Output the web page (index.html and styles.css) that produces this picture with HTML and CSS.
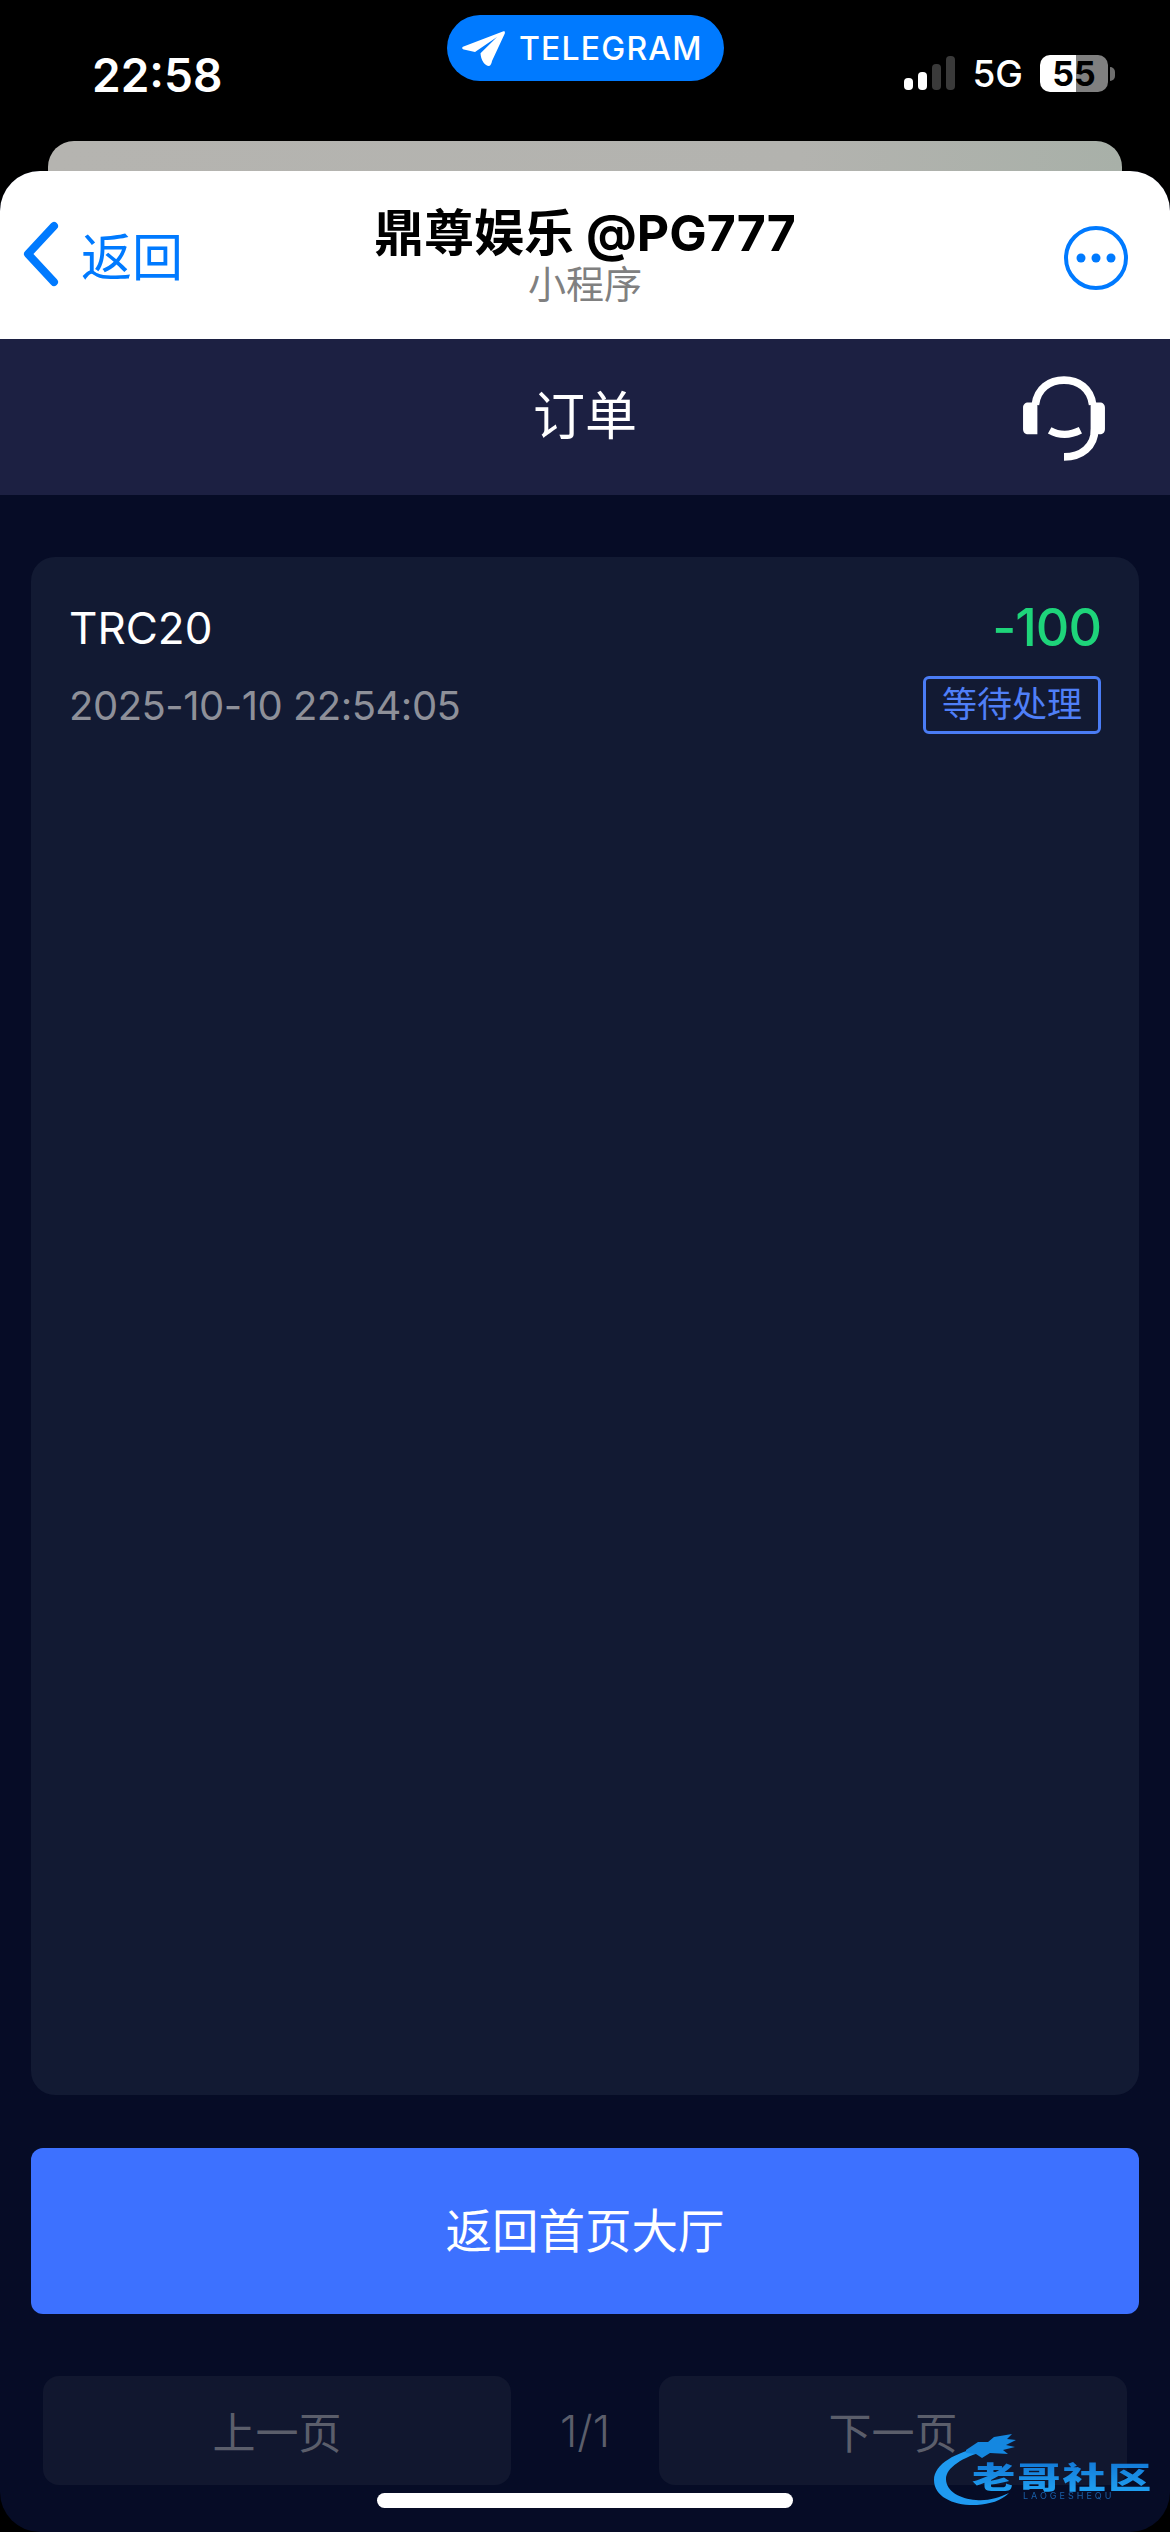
FILE: index.html
```html
<!DOCTYPE html>
<html>
<head>
    <title>订单</title>
    <link rel="stylesheet" href="styles.css">
</head>
<body>
    <div class="phone">
        <div class="status">
            <div class="time">22:58</div>
            <div class="pill">
                <svg class="plane" width="43" height="35" viewBox="0 0 43 35">
                    <path d="M41.500 .3 1.600 15.500C-.4 16.300-.3 17.900 1.800 18.400l11.200 2.700L35 6 18.500 22.300c.3 3 .6 6 3.300 9.700 1.500 2.100 5.200 4 6.500 2.300 1-1.300 1.400-2.600 1.700-4.300L42.800 2.400c.3-1.600-.1-2.500-1.300-2.100z" fill="#fff"/>
                </svg>
                <span>TELEGRAM</span>
            </div>
            <div class="status-right">
                <div class="bars">
                    <i class="bar b1"></i>
                    <i class="bar b2"></i>
                    <i class="bar b3"></i>
                    <i class="bar b4"></i>
                </div>
                <span class="net">5G</span>
                <div class="battery"><span>55</span></div>
                <i class="battery-tip"></i>
            </div>
        </div>
        <div class="back-sheet"></div>
        <div class="window">
            <div class="tg-head">
                <div class="back">
                    <svg width="38" height="66" viewBox="0 0 38 66">
                        <path d="M32 5 6 33l26 28" fill="none" stroke="#007aff" stroke-width="8" stroke-linecap="round" stroke-linejoin="round"/>
                    </svg>
                    <span>返回</span>
                </div>
                <div class="tg-title">
                    <div class="name">鼎尊娱乐 @PG777</div>
                    <div class="sub">小程序</div>
                </div>
                <svg class="more" width="66" height="66" viewBox="0 0 66 66">
                    <circle cx="33" cy="33" r="30" fill="none" stroke="#007aff" stroke-width="4"/>
                    <circle cx="18" cy="33" r="4.500" fill="#007aff"/>
                    <circle cx="33" cy="33" r="4.500" fill="#007aff"/>
                    <circle cx="48" cy="33" r="4.500" fill="#007aff"/>
                </svg>
            </div>
            <div class="nav">
                <span class="nav-title">订单</span>
                <svg class="headset" width="86" height="86" viewBox="0 0 84 84">
                    <path d="M14 28C16 12 28 4 42 4s26 8 28 24" fill="none" stroke="#fff" stroke-width="7.500"/>
                    <path d="M16 26v31H7c-3 0-5-2-5-5V31c0-3 2-5 5-5h9zM68 26h9c3 0 5 2 5 5v21c0 3-2 5-5 5h-9V26z" fill="#fff"/>
                    <path d="M72 52c0 17-13 27-30 27" fill="none" stroke="#fff" stroke-width="7.500"/>
                    <path d="M28 53c9 5 20 5 30 0" fill="none" stroke="#fff" stroke-width="7"/>
                </svg>
            </div>
            <div class="main">
                <div class="card">
                    <div class="row">
                        <div class="coin">TRC20</div>
                        <div class="amount">-100</div>
                    </div>
                    <div class="row row2">
                        <div class="date">2025-10-10 22:54:05</div>
                        <div class="badge">等待处理</div>
                    </div>
                </div>
                <button class="home-btn">返回首页大厅</button>
                <div class="pager">
                    <button class="page-btn">上一页</button>
                    <span class="page-num">1/1</span>
                    <button class="page-btn">下一页</button>
                </div>
            </div>
        </div>
        <div class="home-bar"></div>
        <svg class="mark" width="226" height="84" viewBox="0 0 226 84">
            <defs>
                <linearGradient id="markText" x1="0" y1="0" x2="0" y2="1">
                    <stop offset="0" stop-color="#0f6fd0"/>
                    <stop offset="1" stop-color="#22a6f5"/>
                </linearGradient>
            </defs>
            <path d="M50 17C24 22 2 34 2 50c0 17 20 26 43 25 13-1 24-4 32-12C66 68 56 71 44 70 28 69 14 61 14 49c0-11 16-22 40-28z" fill="#1f9af0"/>
            <path d="M34 20 46 12l10 0 6-5 18-3-5 5 9 1-10 5 9 2-12 3 5 4-18-1-8 5-6-4-10-1z" fill="#1487e0"/>
            <text class="mark-cn" transform="translate(40 58) scale(1.03 .71)" fill="url(#markText)">老哥社区</text>
            <text class="mark-en" x="91" y="69">LAOGESHEQU</text>
        </svg>
    </div>
</body>
</html>
```

FILE: styles.css
```css
* {
    box-sizing: border-box;
}
body {
    margin: 0;
    background: #000;
    font-family: Inter, "Noto Sans CJK SC", sans-serif;
}
.phone {
    position: relative;
    width: 1170px;
    height: 2532px;
    background: #000;
    overflow: hidden;
}
.status {
    display: flex;
    justify-content: space-between;
    height: 141px;
    padding: 15px 55px 0 92px;
    color: #fff;
}
.time {
    margin-top: 32px;
    font-size: 46px;
    font-weight: 600;
    line-height: 56px;
}
.pill {
    display: flex;
    align-items: center;
    gap: 14px;
    width: 277px;
    height: 66px;
    margin-left: 44px;
    padding-left: 15px;
    background: #007aff;
    border-radius: 33px;
    font-size: 32px;
    font-weight: 500;
    letter-spacing: 1.2px;
}
.status-right {
    display: flex;
    align-items: center;
    height: 37px;
    margin-top: 40px;
}
.bars {
    display: flex;
    align-items: flex-end;
    gap: 5px;
    height: 34px;
    margin-top: -2px;
}
.bar {
    width: 9px;
    background: #3a3a3a;
    border-radius: 4px;
}
.b1 {
    height: 12px;
    background: #fff;
}
.b2 {
    height: 18px;
    background: #fff;
}
.b3 {
    height: 26px;
}
.b4 {
    height: 34px;
}
.net {
    margin-left: 17px;
    font-size: 37px;
    font-weight: 500;
}
.battery {
    display: flex;
    align-items: center;
    justify-content: center;
    width: 68px;
    height: 37px;
    margin-left: 17px;
    background: linear-gradient(90deg, #fff 53%, #808080 53%);
    border-radius: 10px;
    color: #000;
    font-size: 34px;
    font-weight: 700;
}
.battery-tip {
    width: 5px;
    height: 14px;
    margin-left: 2px;
    background: #6e6e6e;
    border-radius: 0 7px 7px 0;
}
.back-sheet {
    height: 30px;
    margin: 0 48px;
    background: linear-gradient(90deg, #b5b4b0 0%, #b3b3af 70%, #a8b0a8 100%);
    border-radius: 26px 26px 0 0;
}
.window {
    display: flex;
    flex-direction: column;
    height: 2361px;
    background: #060c26;
    border-radius: 40px;
    overflow: hidden;
}
.tg-head {
    display: flex;
    align-items: center;
    justify-content: space-between;
    position: relative;
    height: 168px;
    padding: 0 41px 0 22px;
    background: #fff;
}
.back {
    display: flex;
    align-items: center;
    gap: 21px;
    margin-top: -2px;
    color: #007aff;
    font-size: 51px;
}
.tg-title {
    position: absolute;
    left: 0;
    right: 0;
    top: 31px;
    text-align: center;
}
.name {
    color: #000;
    font-size: 50px;
    font-weight: 700;
    line-height: 62px;
}
.sub {
    margin-top: -3px;
    color: #808080;
    font-size: 38px;
    line-height: 46px;
}
.more {
    margin-top: 6px;
}
.nav {
    display: flex;
    align-items: center;
    justify-content: center;
    position: relative;
    height: 156px;
    padding-bottom: 9px;
    background: #1c2042;
}
.nav-title {
    color: #fff;
    font-size: 52px;
}
.headset {
    position: absolute;
    left: 1021px;
    top: 37px;
}
.main {
    display: flex;
    flex-direction: column;
    flex: 1;
    padding: 62px 31px 0;
}
.card {
    height: 1538px;
    padding: 41px 38px;
    background: #121a33;
    border-radius: 24px;
}
.row {
    display: flex;
    align-items: center;
    justify-content: space-between;
}
.row2 {
    margin-top: 18px;
}
.coin {
    color: #fff;
    font-size: 44px;
    line-height: 60px;
}
.amount {
    color: #1ed47a;
    font-size: 52px;
    font-weight: 500;
    line-height: 60px;
    letter-spacing: -1px;
}
.date {
    color: #8e9099;
    font-size: 40px;
    letter-spacing: -.5px;
}
.badge {
    height: 58px;
    padding: 0 16px;
    border: 3px solid #4a7cf5;
    border-radius: 6px;
    color: #4f7ff8;
    font-size: 35px;
    line-height: 50px;
}
.home-btn {
    height: 166px;
    margin-top: 53px;
    padding-bottom: 9px;
    background: #3d71ff;
    border: none;
    border-radius: 12px;
    color: #fff;
    font-family: inherit;
    font-size: 46.500px;
}
.pager {
    display: flex;
    align-items: center;
    height: 109px;
    margin: 62px 12px 0;
}
.page-btn {
    width: 468px;
    height: 109px;
    padding-bottom: 3px;
    background: #11172f;
    border: none;
    border-radius: 16px;
    color: #5b5e6b;
    font-family: inherit;
    font-size: 43px;
}
.page-num {
    flex: 1;
    color: #5b5e6b;
    font-size: 44px;
    font-weight: 300;
    text-align: center;
}
.home-bar {
    position: absolute;
    left: 377px;
    top: 2493px;
    width: 416px;
    height: 15px;
    background: #fff;
    border-radius: 8px;
}
.mark {
    position: absolute;
    left: 932px;
    top: 2430px;
    filter: blur(.7px);
}
.mark-cn {
    font-family: "Noto Sans CJK SC", sans-serif;
    font-size: 42px;
    font-weight: 900;
    letter-spacing: 2px;
}
.mark-en {
    fill: #1a5fa8;
    font-family: Inter, sans-serif;
    font-size: 9px;
    letter-spacing: 3px;
}
```
